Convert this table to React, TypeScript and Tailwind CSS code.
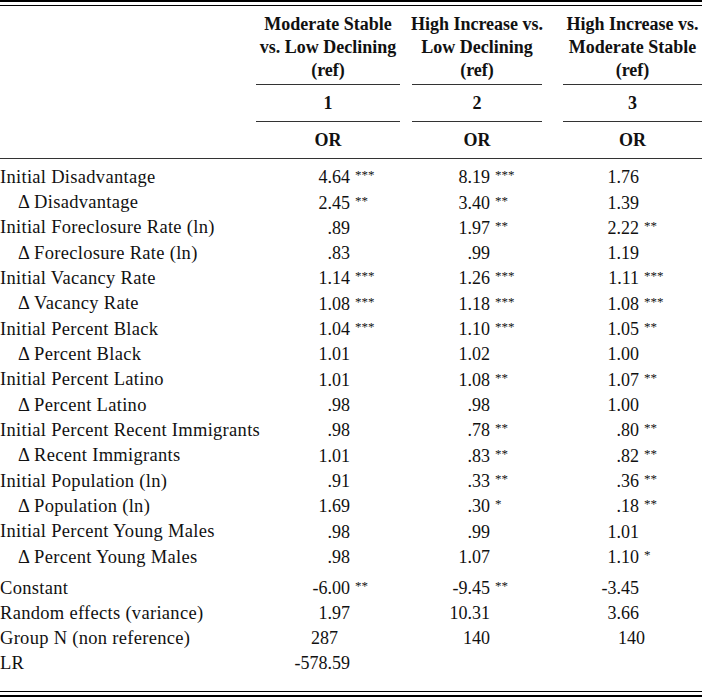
import React from 'react';

type Row = { label: string; sub?: boolean; cells: string[] };

const mainRows: Row[] = [
  { label: 'Initial Disadvantage', cells: ['4.64 ***', '8.19 ***', '1.76'] },
  { label: 'Δ Disadvantage', sub: true, cells: ['2.45 **', '3.40 **', '1.39'] },
  { label: 'Initial Foreclosure Rate (ln)', cells: ['.89', '1.97 **', '2.22 **'] },
  { label: 'Δ Foreclosure Rate (ln)', sub: true, cells: ['.83', '.99', '1.19'] },
  { label: 'Initial Vacancy Rate', cells: ['1.14 ***', '1.26 ***', '1.11 ***'] },
  { label: 'Δ Vacancy Rate', sub: true, cells: ['1.08 ***', '1.18 ***', '1.08 ***'] },
  { label: 'Initial Percent Black', cells: ['1.04 ***', '1.10 ***', '1.05 **'] },
  { label: 'Δ Percent Black', sub: true, cells: ['1.01', '1.02', '1.00'] },
  { label: 'Initial Percent Latino', cells: ['1.01', '1.08 **', '1.07 **'] },
  { label: 'Δ Percent Latino', sub: true, cells: ['.98', '.98', '1.00'] },
  { label: 'Initial Percent Recent Immigrants', cells: ['.98', '.78 **', '.80 **'] },
  { label: 'Δ Recent Immigrants', sub: true, cells: ['1.01', '.83 **', '.82 **'] },
  { label: 'Initial Population (ln)', cells: ['.91', '.33 **', '.36 **'] },
  { label: 'Δ Population (ln)', sub: true, cells: ['1.69', '.30 *', '.18 **'] },
  { label: 'Initial Percent Young Males', cells: ['.98', '.99', '1.01'] },
  { label: 'Δ Percent Young Males', sub: true, cells: ['.98', '1.07', '1.10 *'] },
];

const footRows: Row[] = [
  { label: 'Constant', cells: ['-6.00 **', '-9.45 **', '-3.45'] },
  { label: 'Random effects (variance)', cells: ['1.97', '10.31', '3.66'] },
  { label: 'Group N (non reference)', cells: ['287', '140', '140'] },
  { label: 'LR', cells: ['-578.59', '', ''] },
];

const Num = ({ value, box, extra }: { value: string; box: string; extra?: string }) => {
  const [n, s] = value.split(' ');
  return (
    <div className="flex items-center">
      <span className={`${box} text-right ${extra ?? ''}`}>{n}</span>
      {s && <span className="ml-[5px] text-[13px] leading-none -translate-y-[3px]">{s}</span>}
    </div>
  );
};

const DataRow = ({ row, h }: { row: Row; h: string }) => (
  <div className={`flex items-center ${h}`}>
    <div className={`w-[256px] whitespace-nowrap text-[18.5px] tracking-[0.3px] ${row.sub ? 'pl-[18px]' : ''}`}>
      {row.label}
    </div>
    <div className="w-[144px]">
      <Num value={row.cells[0]} box="w-[94px]" extra={row.cells[0] === '287' ? 'pr-[12px]' : ''} />
    </div>
    <div className="w-[12px]" />
    <div className="w-[130px]">
      <Num value={row.cells[1]} box="w-[78px]" />
    </div>
    <div className="w-[21px]" />
    <div className="w-[139px]">
      <Num value={row.cells[2]} box="w-[76px]" extra={row.cells[2] === '140' ? 'translate-x-[6px]' : ''} />
    </div>
  </div>
);

const HeadCol = ({ w, lines, num }: { w: string; lines: string[]; num: string }) => (
  <div className={`${w} flex flex-col font-bold`}>
    <div className="flex flex-col items-center pt-[7px] pb-[2px] leading-[23px]">
      {lines.map((l) => (
        <span key={l} className="whitespace-nowrap">{l}</span>
      ))}
    </div>
    <div className="border-t border-[#333]" />
    <div className="h-[36px] flex items-center justify-center">{num}</div>
    <div className="border-t border-[#333]" />
    <div className="h-[36px] flex items-center justify-center">OR</div>
  </div>
);

export default function App() {
  return (
    <div className="w-[702px] h-[700px] bg-white text-[#111] text-[18px] font-['Liberation_Serif',serif]">
      <div className="border-t-2 border-black" />
      <div className="mt-[3px] border-t border-black" />

      <div className="flex">
        <div className="w-[256px]" />
        <HeadCol w="w-[144px]" lines={['Moderate Stable', 'vs. Low Declining', '(ref)']} num="1" />
        <div className="w-[12px]" />
        <HeadCol w="w-[130px]" lines={['High Increase vs.', 'Low Declining', '(ref)']} num="2" />
        <div className="w-[21px]" />
        <HeadCol w="w-[139px]" lines={['High Increase vs.', 'Moderate Stable', '(ref)']} num="3" />
      </div>
      <div className="border-t border-[#333]" />

      <div className="pt-[6px]">
        {mainRows.map((r) => (
          <DataRow key={r.label} row={r} h="h-[25.33px]" />
        ))}
      </div>
      <div className="pt-[6px]">
        {footRows.map((r) => (
          <DataRow key={r.label} row={r} h="h-[24.9px]" />
        ))}
      </div>

      <div className="mt-[15px] border-t border-black" />
      <div className="mt-[3px] border-t-2 border-black" />
    </div>
  );
}
